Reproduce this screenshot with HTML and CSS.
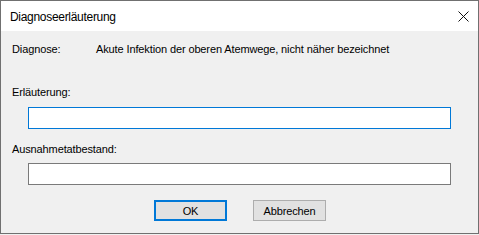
FILE: index.html
```html
<!DOCTYPE html>
<html lang="de">
<head>
  <meta charset="UTF-8">
  <title>Diagnoseerläuterung</title>
  <link rel="stylesheet" href="styles.css">
</head>
<body>

<div class="window">
  <!-- Titelleiste -->
  <div class="titlebar">
    <span class="title">Diagnoseerläuterung</span>
    <span class="close">
      <svg width="11" height="11" viewBox="0 0 11 11">
        <path d="M0.5 0.5 L10.5 10.5 M10.5 0.5 L0.5 10.5" stroke="#111" stroke-width="1" fill="none"/>
      </svg>
    </span>
  </div>

  <div class="content">
    <div class="diag-row">
      <span class="diag-label">Diagnose:</span>
      <span class="diag-text">Akute Infektion der oberen Atemwege, nicht näher bezeichnet</span>
    </div>

    <div class="field-label first">Erläuterung:</div>
    <input type="text" class="field focused">

    <div class="field-label second">Ausnahmetatbestand:</div>
    <input type="text" class="field tight">

    <div class="buttons">
      <button class="btn default">OK</button>
      <button class="btn">Abbrechen</button>
    </div>
  </div>
</div>

</body>
</html>
```

FILE: styles.css
```css
html, body {
  margin: 0;
  padding: 0;
  background: #f0f0f0;
}
body {
  font-family: "Liberation Sans", Arial, sans-serif;
  font-size: 11px;
  letter-spacing: -0.12px;
  color: #000;
}
.window {
  width: 479px;
  height: 234px;
  box-sizing: border-box;
  border: 1px solid #707070;
  background: #f0f0f0;
  display: flex;
  flex-direction: column;
}
.titlebar {
  height: 30px;
  background: #fff;
  display: flex;
  align-items: center;
  justify-content: space-between;
  padding-left: 9px;
  padding-right: 9px;
  flex-shrink: 0;
}
.title {
  font-size: 12px;
  letter-spacing: -0.3px;
  margin-top: 1px;
}
.close {
  display: flex;
  width: 11px;
  height: 11px;
  margin-top: 1px;
}
.content {
  flex: 1;
  padding: 12px 0 0 11px;
}
.diag-row {
  display: flex;
  line-height: 13px;
}
.diag-label {
  width: 84px;
}
.field-label {
  line-height: 13px;
  margin-top: 8px;
}
.field-label.first {
  margin-top: 30px;
}
.field-label.second {
  margin-top: 14px;
}
.field {
  display: block;
  box-sizing: border-box;
  width: 423px;
  height: 22px;
  margin: 8px 0 0 16px;
  border: 1px solid #7a7a7a;
  background: #fff;
  padding: 0 3px;
  font-family: inherit;
  font-size: 11px;
  outline: none;
}
.field.tight {
  margin-top: 7px;
}
.field.focused {
  border-color: #0078d7;
}
.buttons {
  display: flex;
  gap: 26px;
  margin-top: 15px;
  padding-left: 142px;
}
.btn {
  box-sizing: border-box;
  width: 73px;
  height: 21px;
  background: #e1e1e1;
  border: 1px solid #adadad;
  font-family: inherit;
  font-size: 11px;
  letter-spacing: inherit;
  color: #000;
  padding: 0;
  border-radius: 0;
}
.btn.default {
  border: 2px solid #0078d7;
}
```
